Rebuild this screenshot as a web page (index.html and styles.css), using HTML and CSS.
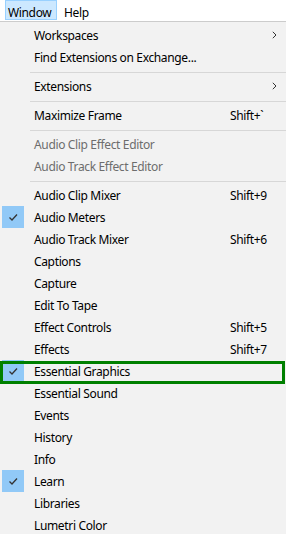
FILE: index.html
```html
<!DOCTYPE html>
<html lang="en">
<head>
  <meta charset="utf-8">
  <title>Window menu</title>
  <link rel="stylesheet" href="styles.css">
</head>
<body>
  <!-- 菜单栏 -->
  <div class="menubar">
    <span class="bar-item open">Window</span>
    <span class="bar-item">Help</span>
  </div>

  <!-- 下拉菜单 -->
  <ul class="menu">
    <li class="item"><span class="check"></span><span class="label">Workspaces</span><span class="key"><svg class="arrow" width="5" height="8" viewBox="0 0 5 8"><path d="M0.8 0.8 L4 4 L0.8 7.2" fill="none" stroke="#333" stroke-width="1"/></svg></span></li>
    <li class="item"><span class="check"></span><span class="label">Find Extensions on Exchange...</span><span class="key"></span></li>
    <li class="sep"></li>
    <li class="item"><span class="check"></span><span class="label">Extensions</span><span class="key"><svg class="arrow" width="5" height="8" viewBox="0 0 5 8"><path d="M0.8 0.8 L4 4 L0.8 7.2" fill="none" stroke="#333" stroke-width="1"/></svg></span></li>
    <li class="sep"></li>
    <li class="item"><span class="check"></span><span class="label">Maximize Frame</span><span class="key">Shift+`</span></li>
    <li class="sep"></li>
    <li class="item disabled"><span class="check"></span><span class="label">Audio Clip Effect Editor</span><span class="key"></span></li>
    <li class="item disabled"><span class="check"></span><span class="label">Audio Track Effect Editor</span><span class="key"></span></li>
    <li class="sep"></li>
    <li class="item"><span class="check"></span><span class="label">Audio Clip Mixer</span><span class="key">Shift+9</span></li>
    <li class="item checked"><span class="check"><svg width="22" height="22" viewBox="0 0 22 22"><path d="M7.5 11.5 L10 14 L15 8.5" fill="none" stroke="#333" stroke-width="1.3"/></svg></span><span class="label">Audio Meters</span><span class="key"></span></li>
    <li class="item"><span class="check"></span><span class="label">Audio Track Mixer</span><span class="key">Shift+6</span></li>
    <li class="item"><span class="check"></span><span class="label">Captions</span><span class="key"></span></li>
    <li class="item"><span class="check"></span><span class="label">Capture</span><span class="key"></span></li>
    <li class="item"><span class="check"></span><span class="label">Edit To Tape</span><span class="key"></span></li>
    <li class="item"><span class="check"></span><span class="label">Effect Controls</span><span class="key">Shift+5</span></li>
    <li class="item"><span class="check"></span><span class="label">Effects</span><span class="key">Shift+7</span></li>
    <li class="item checked marked"><span class="check"><svg width="22" height="22" viewBox="0 0 22 22"><path d="M7.5 11.5 L10 14 L15 8.5" fill="none" stroke="#333" stroke-width="1.3"/></svg></span><span class="label">Essential Graphics</span><span class="key"></span></li>
    <li class="item"><span class="check"></span><span class="label">Essential Sound</span><span class="key"></span></li>
    <li class="item"><span class="check"></span><span class="label">Events</span><span class="key"></span></li>
    <li class="item"><span class="check"></span><span class="label">History</span><span class="key"></span></li>
    <li class="item"><span class="check"></span><span class="label">Info</span><span class="key"></span></li>
    <li class="item checked"><span class="check"><svg width="22" height="22" viewBox="0 0 22 22"><path d="M7.5 11.5 L10 14 L15 8.5" fill="none" stroke="#333" stroke-width="1.3"/></svg></span><span class="label">Learn</span><span class="key"></span></li>
    <li class="item"><span class="check"></span><span class="label">Libraries</span><span class="key"></span></li>
    <li class="item"><span class="check"></span><span class="label">Lumetri Color</span><span class="key"></span></li>
  </ul>
</body>
</html>
```

FILE: styles.css
```css
* {
  margin: 0;
  padding: 0;
  box-sizing: border-box;
}
ul {
  list-style: none;
}
html, body {
  width: 286px;
  height: 534px;
  overflow: hidden;
  background-color: #f2f2f2;
}
body {
  font-family: "Noto Sans", "Open Sans", sans-serif;
  font-size: 12px;
  letter-spacing: -0.35px;
  color: #000;
}
.menubar {
  display: flex;
  height: 22px;
  padding-left: 5px;
  background-color: #fff;
  border-bottom: 1px solid #cccccc;
}
.menubar .bar-item {
  height: 20px;
  padding: 3px 2px 0 2px;
  line-height: 17px;
  border: 1px solid transparent;
}
.menubar .bar-item.open {
  width: 52px;
  background-color: #cce8ff;
  border-color: #99d1ff;
}
.menubar .bar-item + .bar-item {
  margin-left: 4px;
}
.menu {
  padding-top: 2px;
}
.menu .item {
  position: relative;
  display: grid;
  grid-template-columns: 34px 1fr 56px;
  align-items: center;
  height: 22px;
  white-space: nowrap;
}
.menu .item .label,
.menu .item .key {
  padding-top: 1px;
}
.menu .item .check {
  width: 22px;
  height: 22px;
  margin-left: 2px;
}
.menu .item.checked .check {
  background-color: #91c9f7;
}
.menu .item .check svg {
  display: block;
}
.menu .item .key {
  display: flex;
  align-items: center;
}
.menu .item .arrow {
  margin-left: auto;
  margin-right: 9px;
  margin-top: -1px;
}
.menu .item.disabled {
  color: #6d6d6d;
}
.menu .sep {
  height: 7px;
  padding-top: 4px;
  margin-left: 30px;
}
.menu .sep::before {
  content: "";
  display: block;
  height: 1px;
  background-color: #d7d7d7;
}
/* 高亮框 */
.menu .item.marked::after {
  content: "";
  position: absolute;
  left: 0;
  right: 1px;
  top: 1px;
  bottom: -2px;
  border: 3px solid #008000;
}
```
